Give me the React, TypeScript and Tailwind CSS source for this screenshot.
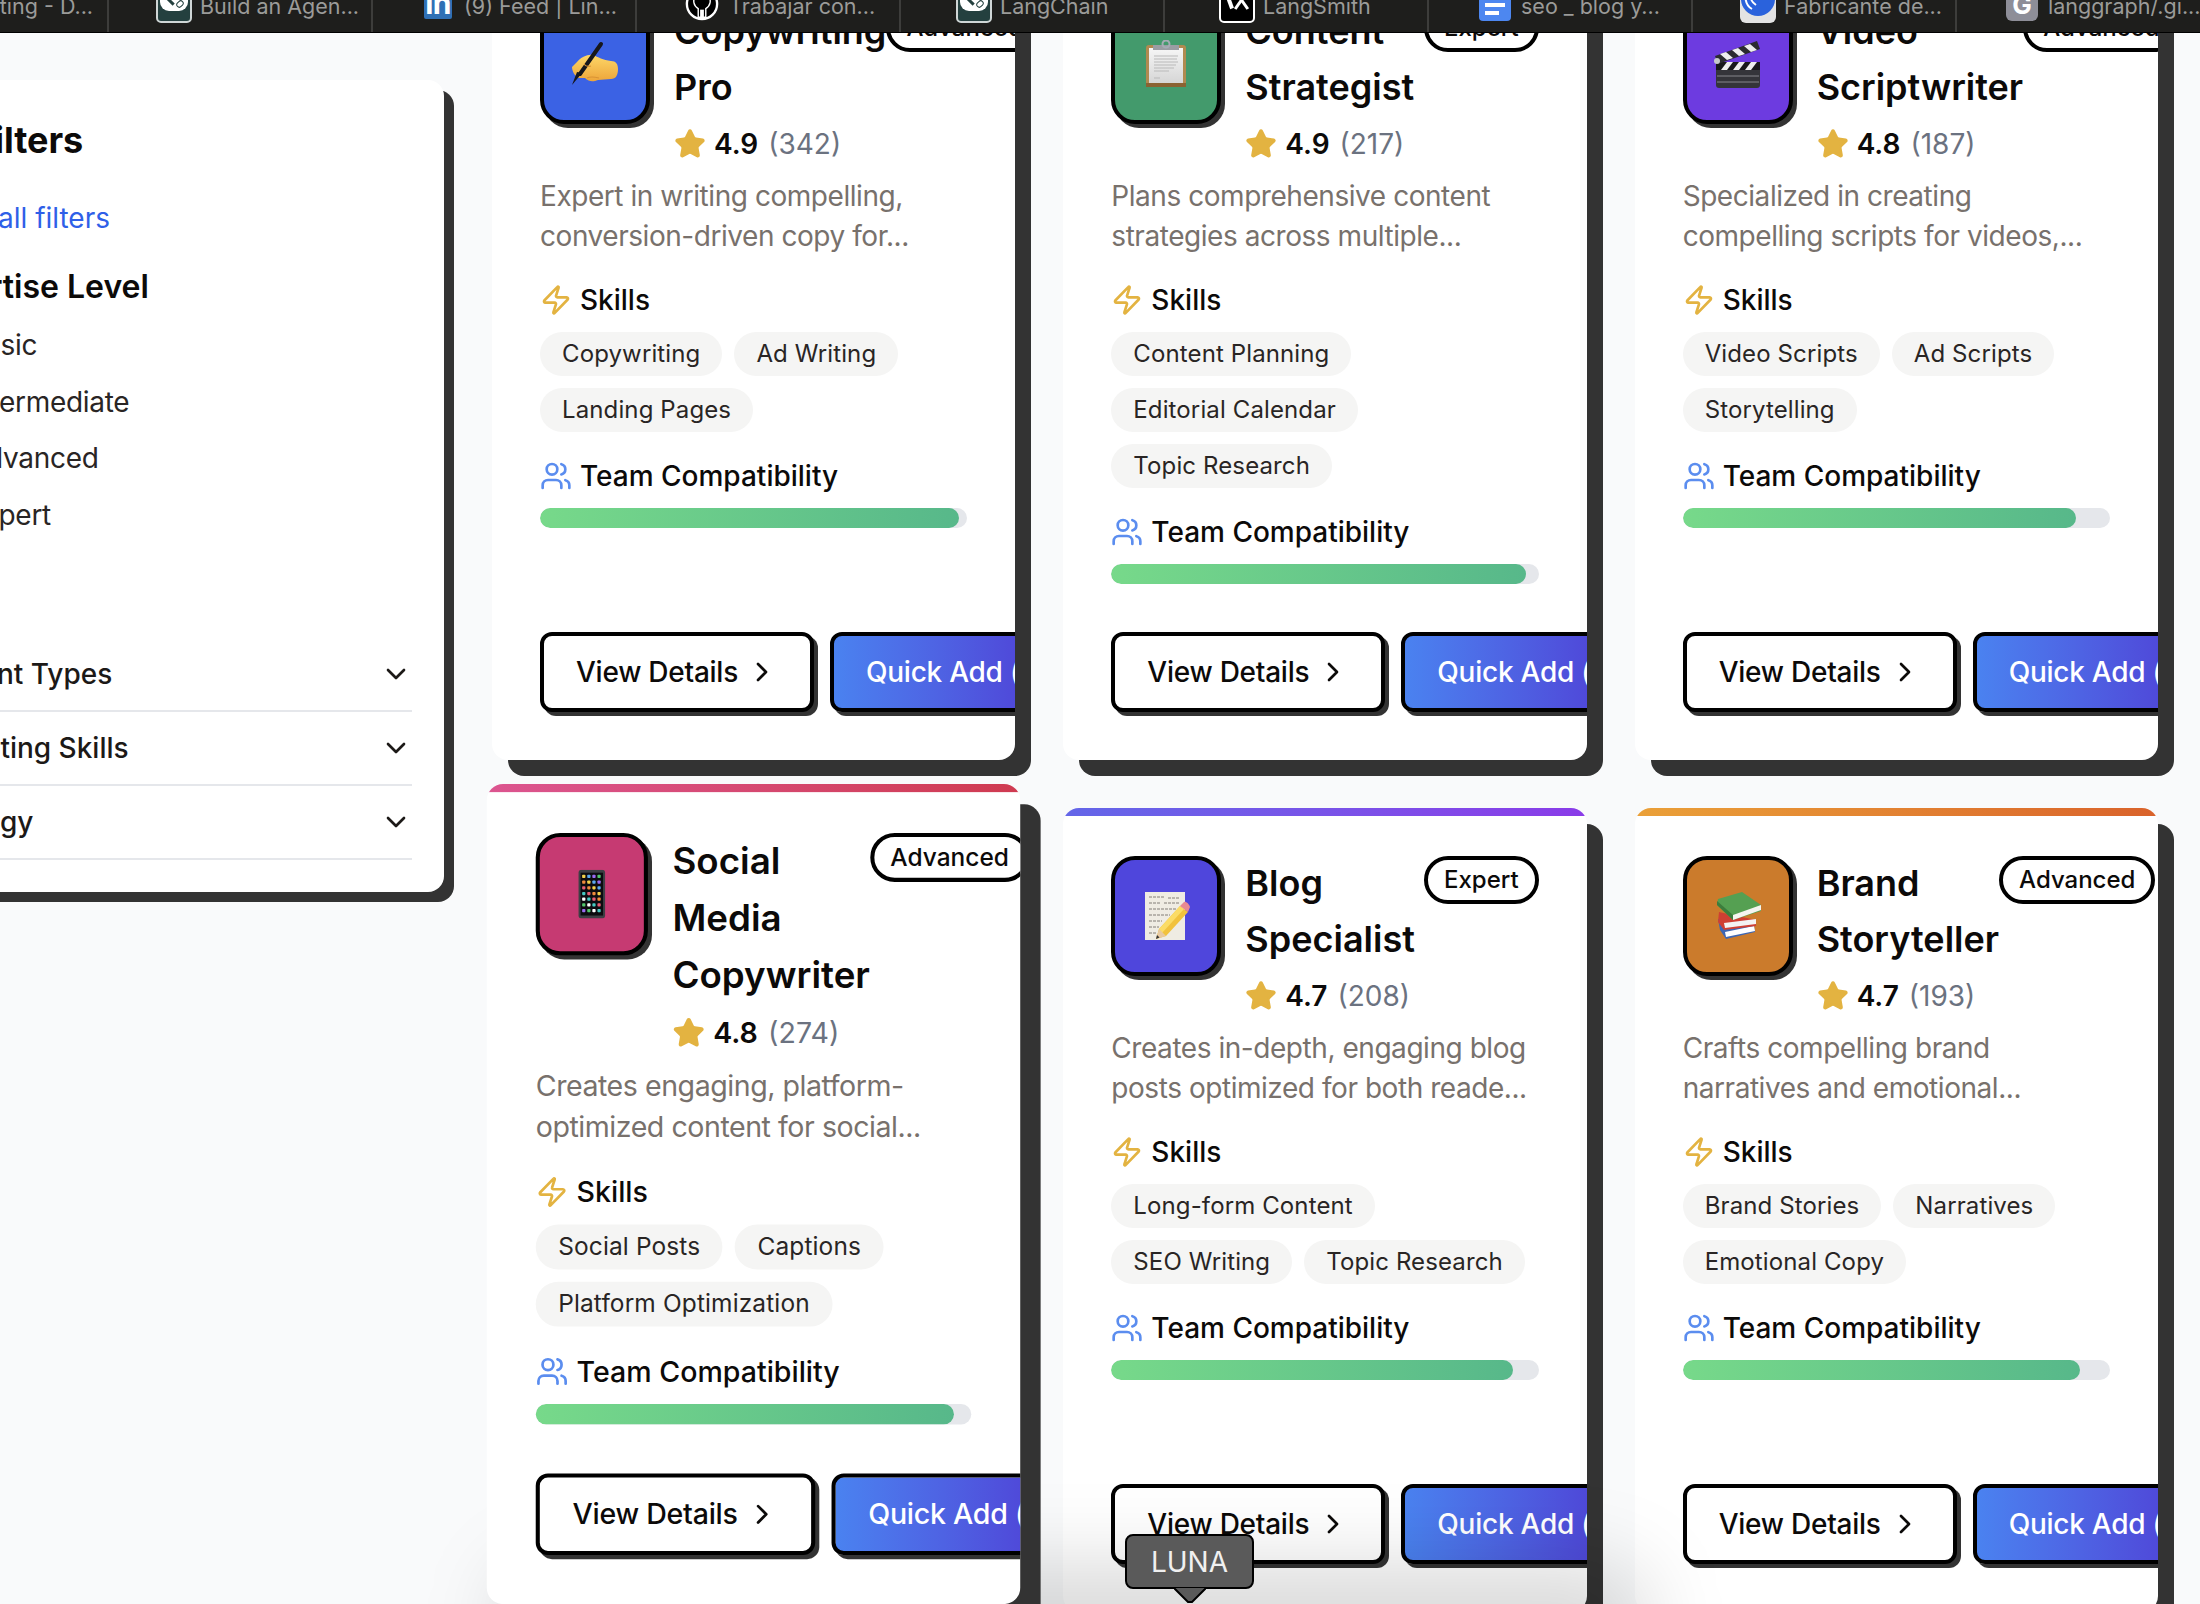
import React from "react";
import {ChevronDown, ChevronRight, Star, Users, Zap} from "lucide-react";

const font = {fontFamily: "Inter, 'Noto Sans', sans-serif"};

const ChainIcon = () => (
  <div className="relative h-[36px] w-[36px] overflow-hidden rounded-[5px] border-2 border-[#cfd6d6] bg-[#24403f]">
    <div className="absolute left-[2px] top-[-6px] h-[28px] w-[28px] rounded-[9px] bg-white" />
    <div className="absolute left-[8px] top-[11px] h-[3px] w-[9px] rotate-45 bg-[#24403f]" />
    <div className="absolute left-[18px] top-[12px] h-[6px] w-[8px] -rotate-45 rounded-full border border-[#24403f]" />
  </div>
);

const LinkedinIcon = () => (
  <div className="mx-auto mb-[4px] flex h-[32px] w-[28px] items-end justify-center overflow-hidden rounded-[2px] bg-[#2f70b5]">
    <span className="text-[30px] font-bold leading-[32px] tracking-tight text-white">in</span>
  </div>
);

const GithubIcon = () => (
  <svg viewBox="0 0 36 36" className="mb-[2px] h-[34px] w-[34px]">
    <circle cx="18" cy="18" r="16" fill="#000000" stroke="#ffffff" strokeWidth="2.5" />
    <path d="M11 10 C14 8 22 8 25 10 C28 14 27 20 22 23 L22 32 H14 L14 23 C9 20 8 14 11 10 Z" fill="#000000" stroke="#ffffff" strokeWidth="1.5" />
    <path d="M16 24 V33 H20 V24 Z" fill="#ffffff" />
  </svg>
);

const SmithIcon = () => (
  <div className="relative h-[36px] w-[36px] overflow-hidden rounded-[5px] border-2 border-white bg-black">
    <div className="absolute left-[6px] top-[2px] h-[18px] w-[4px] -rotate-[20deg] bg-white" />
    <div className="absolute left-[19px] top-[0px] h-[22px] w-[3px] rotate-[35deg] bg-white" />
    <div className="absolute left-[19px] top-[0px] h-[22px] w-[3px] -rotate-[35deg] bg-white" />
  </div>
);

const DocsIcon = () => (
  <div className="mx-auto mb-[2px] flex h-[36px] w-[32px] flex-col justify-end gap-[4px] rounded-[4px] bg-[#4d87f0] px-[6px] pb-[6px]">
    <div className="h-[4px] bg-white" />
    <div className="h-[4px] w-[14px] bg-white" />
  </div>
);

const RingIcon = () => (
  <div className="h-[36px] w-[36px] overflow-hidden rounded-[6px] bg-[#e3e3e3]">
    <svg viewBox="0 0 36 36" className="h-full w-full">
      <circle cx="18" cy="12" r="17" fill="#2a62dc" />
      <path d="M9 -2 C3 8 5 18 12 22" fill="none" stroke="#ffffff" strokeWidth="2" />
      <path d="M14 -2 C8 7 10 14 16 18" fill="none" stroke="#ffffff" strokeWidth="2" />
    </svg>
  </div>
);

const GoogleIcon = () => (
  <div className="mx-auto mb-[2px] flex h-[32px] w-[32px] items-end justify-center rounded-[6px] bg-[#8e8e98]">
    <span className="text-[26px] font-bold leading-[32px] text-white">G</span>
  </div>
);

const tabs: {label: string; offset: string; icon: React.ReactNode}[] = [
  {label: "Marketing - D...", offset: "pl-[47px]", icon: <ChainIcon />},
  {label: "Build an Agen...", offset: "pl-[47px]", icon: <ChainIcon />},
  {label: "(9) Feed | Lin...", offset: "pl-[47px]", icon: <LinkedinIcon />},
  {label: "Trabajar con...", offset: "pl-[48px]", icon: <GithubIcon />},
  {label: "LangChain", offset: "pl-[55px]", icon: <ChainIcon />},
  {label: "LangSmith", offset: "pl-[54px]", icon: <SmithIcon />},
  {label: "seo _ blog y...", offset: "pl-[48px]", icon: <DocsIcon />},
  {label: "Fabricante de...", offset: "pl-[47px]", icon: <RingIcon />},
  {label: "langgraph/.gi...", offset: "pl-[47px]", icon: <GoogleIcon />},
];

const WritingHand = () => (
  <svg viewBox="0 0 48 48" className="h-[48px] w-[48px]">
    <defs>
      <linearGradient id="hand" x1="0" y1="0" x2="0" y2="1">
        <stop offset="0" stopColor="#fdd768" />
        <stop offset="1" stopColor="#eda53a" />
      </linearGradient>
    </defs>
    <path d="M6 22 C10 17 17 14 22 15 C27 17 32 20 40 21 C45 21 47 24 47 29 C47 35 45 39 40 39 L27 40 C22 42 18 42 14 38 L8 38 C3 36 1 30 1 27 Z" fill="url(#hand)" />
    <path d="M30 4 L9 34" stroke="#17171b" strokeWidth="4" strokeLinecap="round" />
    <path d="M11 33 L1 45 L6 32 Z" fill="#17171b" />
    <path d="M13 24 C15 27 17 27 20 26 M16 38 C20 36 24 37 28 38" fill="none" stroke="#d99334" strokeWidth="1.2" />
  </svg>
);

const Clipboard = () => (
  <svg viewBox="0 0 48 48" className="h-[48px] w-[48px]">
    <defs>
      <linearGradient id="paper" x1="0" y1="0" x2="0" y2="1">
        <stop offset="0" stopColor="#f6f6f6" />
        <stop offset="1" stopColor="#d6d6d6" />
      </linearGradient>
    </defs>
    <rect x="4" y="5" width="40" height="42" rx="3" fill="#b08a50" />
    <rect x="4" y="43" width="40" height="4" fill="#8a6232" />
    <rect x="7" y="8" width="34" height="35" fill="url(#paper)" />
    <path d="M11 5 H37 V10 H11 Z" fill="#9a9da3" />
    <circle cx="24" cy="4" r="3.5" fill="none" stroke="#a5acb5" strokeWidth="2" />
    <path d="M12 16 H36 M12 19 H35 M12 22 H36 M12 25 H34 M12 28 H32 M12 31 H27 M12 38 H18" stroke="#b9b9b9" strokeWidth="1.2" />
  </svg>
);

const Clapper = () => (
  <svg viewBox="0 0 48 48" className="h-[48px] w-[48px]">
    <rect x="2" y="22" width="44" height="26" rx="3" fill="#34343a" />
    <path d="M2 22 H46 V30 H2 Z" fill="#18181b" />
    <path d="M7 30 L13 22 H19 L13 30 Z M19 30 L25 22 H31 L25 30 Z M31 30 L37 22 H43 L37 30 Z" fill="#eeeeee" />
    <path d="M3 36 H45 M3 42 H45" stroke="#85858b" strokeWidth="1" />
    <path d="M1 16 L43 1 L46 9 L4 24 Z" fill="#2b2b30" />
    <path d="M6 14 L12 12 L19 18 L13 20 Z M18 10 L24 8 L31 14 L25 16 Z M30 6 L36 4 L43 10 L37 12 Z" fill="#eeeeee" />
    <circle cx="3" cy="21" r="3" fill="#c5c8cc" />
  </svg>
);

const Phone = () => {
  const colors = ["#f2d14b", "#52c76b", "#e85d75", "#5aa9f0", "#ffffff", "#f08a3c", "#9a6cf0", "#45c9c2"];
  return (
    <svg viewBox="0 0 48 48" className="h-[48px] w-[48px]">
      <rect x="11" y="0" width="26" height="48" rx="3" fill="#3c3f44" />
      <rect x="13" y="3" width="22" height="42" fill="#0c0c10" />
      {Array.from({length: 28}).map((_, i) => (
        <rect key={i} x={14.5 + (i % 4) * 5} y={5 + Math.floor(i / 4) * 5.6} width="3.2" height="3.2" rx="0.8" fill={colors[(i * 3 + Math.floor(i / 4)) % colors.length]} />
      ))}
    </svg>
  );
};

const Memo = () => (
  <svg viewBox="0 0 48 48" className="h-[48px] w-[48px]">
    <rect x="3" y="0" width="40" height="48" fill="#efece3" />
    <path d="M7 5 H22 M26 6 H38 M7 11 H18 M22 11 H38 M7 17 H34 M7 23 H28 M7 29 H20 M7 35 H17 M7 41 H14" stroke="#77736c" strokeWidth="0.9" strokeDasharray="3 1" />
    <path d="M38 14 L46 20 L24 44 L14 47 L17 37 Z" fill="#f1c23d" />
    <path d="M38 14 L42 17 L20 41 L17 37 Z" fill="#fbdc66" />
    <path d="M38 14 L42 10 C44 9 47 12 48 15 L46 20 Z" fill="#e88a93" />
    <path d="M17 37 L24 44 L14 47 Z" fill="#e8c9a0" />
    <path d="M15 43 L17.5 45.5 L14 47 Z" fill="#333333" />
  </svg>
);

const Books = () => (
  <svg viewBox="0 0 48 48" className="h-[48px] w-[48px]">
    <path d="M4 27 L40 34 L41 40 L12 47 L6 38 Z" fill="#3e66b3" />
    <path d="M11 40 L40 34 L41 39 L12 45 Z" fill="#ffffff" />
    <path d="M5 20 L42 28 L42 34 L10 38 L4 30 Z" fill="#cf3f33" />
    <path d="M10 31 L42 27 L42 32 L11 36 Z" fill="#f3f3f3" />
    <path d="M4 7 L28 0 L47 13 L47 19 L19 28 L3 13 Z" fill="#55a052" />
    <path d="M19 23 L47 13 L47 18 L19 28 Z" fill="#f5f5f0" />
    <path d="M3 9 L19 23 L19 28 L3 13 Z" fill="#3c7d3d" />
  </svg>
);

type Agent = {
  title: string;
  level: string;
  iconBg: string;
  emoji: React.ReactNode;
  rating: string;
  reviews: string;
  description: string;
  skills: string[];
  compat: number;
  strip: string;
};

const agents: Agent[] = [
  {
    title: "Copywriting Pro",
    level: "Advanced",
    iconBg: "bg-[#3b62e4]",
    emoji: <WritingHand />,
    rating: "4.9",
    reviews: "(342)",
    description: "Expert in writing compelling, conversion-driven copy for...",
    skills: ["Copywriting", "Ad Writing", "Landing Pages"],
    compat: 98,
    strip: "from-[#3b82f6] to-[#4f46e5]",
  },
  {
    title: "Content Strategist",
    level: "Expert",
    iconBg: "bg-[#439a6c]",
    emoji: <Clipboard />,
    rating: "4.9",
    reviews: "(217)",
    description: "Plans comprehensive content strategies across multiple...",
    skills: ["Content Planning", "Editorial Calendar", "Topic Research"],
    compat: 97,
    strip: "from-[#10b981] to-[#059669]",
  },
  {
    title: "Video Scriptwriter",
    level: "Advanced",
    iconBg: "bg-[#6d3be0]",
    emoji: <Clapper />,
    rating: "4.8",
    reviews: "(187)",
    description: "Specialized in creating compelling scripts for videos,...",
    skills: ["Video Scripts", "Ad Scripts", "Storytelling"],
    compat: 92,
    strip: "from-[#8b5cf6] to-[#7c3aed]",
  },
  {
    title: "Social Media Copywriter",
    level: "Advanced",
    iconBg: "bg-[#c63a72]",
    emoji: <Phone />,
    rating: "4.8",
    reviews: "(274)",
    description: "Creates engaging, platform-optimized content for social...",
    skills: ["Social Posts", "Captions", "Platform Optimization"],
    compat: 96,
    strip: "from-[#dc5590] to-[#cf3a50]",
  },
  {
    title: "Blog Specialist",
    level: "Expert",
    iconBg: "bg-[#4f46dc]",
    emoji: <Memo />,
    rating: "4.7",
    reviews: "(208)",
    description: "Creates in-depth, engaging blog posts optimized for both reade...",
    skills: ["Long-form Content", "SEO Writing", "Topic Research"],
    compat: 94,
    strip: "from-[#6366e8] to-[#8a3be8]",
  },
  {
    title: "Brand Storyteller",
    level: "Advanced",
    iconBg: "bg-[#cb7b2c]",
    emoji: <Books />,
    rating: "4.7",
    reviews: "(193)",
    description: "Crafts compelling brand narratives and emotional...",
    skills: ["Brand Stories", "Narratives", "Emotional Copy"],
    compat: 93,
    strip: "from-[#eaa038] to-[#d9622b]",
  },
];

const AgentCard: React.FC<{agent: Agent; lifted?: boolean}> = ({agent, lifted}) => (
  <div
    className={
      "relative flex flex-col overflow-hidden rounded-2xl bg-white p-12 " +
      (lifted ? "z-10 -translate-y-4 scale-[1.02] shadow-[20px_20px_0_#333333]" : "shadow-[16px_16px_0_#333333]")
    }
  >
    <div className={"absolute inset-x-0 top-0 h-2 bg-gradient-to-r " + agent.strip} />
    <div className="mb-3 flex items-start justify-between">
      <div className="flex gap-6">
        <div className={"flex h-[120px] w-[110px] shrink-0 items-center justify-center rounded-3xl border-4 border-black shadow-[4px_4px_0_#333333] " + agent.iconBg}>
          {agent.emoji}
        </div>
        <div>
          <h3 className="-mt-px text-[36px] font-semibold leading-[56px] text-[#0c0a09]">{agent.title}</h3>
          <div className="mt-[9px] flex h-10 items-center gap-2">
            <Star size={32} fill="#e3b341" stroke="#e3b341" />
            <span className="text-[28px] font-semibold text-[#0c0a09]">{agent.rating}</span>
            <span className="ml-[2px] text-[28px] text-[#6b7280]">{agent.reviews}</span>
          </div>
        </div>
      </div>
      <span className="shrink-0 rounded-full border-4 border-black bg-white px-4 py-1 text-[24px] font-medium leading-8 text-[#0c0a09]">
        {agent.level}
      </span>
    </div>
    <p className="text-[28px] leading-10 tracking-[-0.45px] text-[#78716c]">{agent.description}</p>
    <div className="mt-6 flex h-10 items-center gap-2">
      <Zap size={32} stroke="#e3b341" />
      <span className="text-[28px] font-medium text-[#0c0a09]">Skills</span>
    </div>
    <div className="mt-3 flex flex-wrap gap-3">
      {agent.skills.map((skill) => (
        <span key={skill} className="rounded-full bg-[#f5f5f4] px-[22px] py-1.5 text-[24px] leading-8 tracking-[0.12px] text-[#292524]">
          {skill}
        </span>
      ))}
    </div>
    <div className="mt-6 flex h-10 items-center gap-2">
      <Users size={32} stroke="#5b8def" />
      <span className="text-[28px] font-medium text-[#0c0a09]">Team Compatibility</span>
    </div>
    <div className="mt-3 h-5 overflow-hidden rounded-full bg-[#e5e7eb]">
      <div className="h-full rounded-full bg-gradient-to-r from-[#77d98a] to-[#57b88a]" style={{width: `${agent.compat}%`}} />
    </div>
    <div className="mt-auto flex gap-4 pt-12">
      <button type="button" className="flex h-20 shrink-0 items-center gap-2 rounded-xl border-4 border-black bg-white px-8 text-[28px] font-medium tracking-[-0.25px] text-[#0c0a09] shadow-[4px_4px_0_#333333]">
        View Details
        <ChevronRight size={32} />
      </button>
      <button type="button" className="flex h-20 w-[200px] shrink-0 items-center whitespace-nowrap rounded-xl border-4 border-black bg-gradient-to-r from-[#4a82f0] to-[#4f46d8] px-8 text-[28px] font-medium tracking-[-0.25px] text-white shadow-[4px_4px_0_#333333]">
        Quick Add ($29)
      </button>
    </div>
  </div>
);

const FilterRow: React.FC<{label: string; indent: string}> = ({label, indent}) => (
  <div className="flex h-[74px] items-center justify-between border-b-2 border-[#e5e7eb] text-[28px] font-medium text-[#1c1917]">
    <span className={indent}>{label}</span>
    <ChevronDown size={32} stroke="#1c1917" />
  </div>
);

const Sidebar = () => (
  <aside className="-ml-[116px] mt-[47px] h-[812px] w-[560px] shrink-0 rounded-2xl bg-white pl-[50px] pr-8 pt-10 shadow-[10px_10px_0_#333333]">
    <h2 className="ml-[39px] text-[36px] font-bold leading-10 text-[#0c0a09]">Filters</h2>
    <div className="-ml-[14px] mt-[38px] text-[28px] leading-10 text-[#2f5fe8]">Clear all filters</div>
    <h3 className="-ml-[21px] mt-[25px] text-[32px] font-semibold leading-[48px] text-[#0c0a09]">Expertise Level</h3>
    <div className="ml-[33px] mt-[14px] flex flex-col gap-[16.67px] text-[28px] leading-10 tracking-[-0.3px] text-[#292524]">
      <span>Basic</span>
      <span>Intermediate</span>
      <span>Advanced</span>
      <span>Expert</span>
    </div>
    <div className="mt-[103px]">
      <FilterRow label="Content Types" indent="-ml-[17px]" />
      <FilterRow label="Writing Skills" indent="ml-[21px]" />
      <FilterRow label="Strategy" indent="-ml-[14px]" />
    </div>
  </aside>
);

export default function App() {
  return (
    <div className="relative flex h-[1604px] w-[2200px] flex-col overflow-hidden bg-[#f9fafb]" style={font}>
      <div className="flex h-[33px] shrink-0 border-b border-black bg-[#1e1e1c]">
        <div className="-ml-[155px] flex">
          {tabs.map((tab) => (
            <div key={tab.label} className={"flex h-[32px] w-[264px] shrink-0 items-center gap-2 border-r-2 border-[#3d3d3b] " + tab.offset}>
              <div className="-mt-[22px] flex h-[36px] w-[36px] shrink-0 items-end">{tab.icon}</div>
              <span className="-mt-[20px] whitespace-nowrap text-[21.5px] leading-[32px] text-[#9b9b99]">{tab.label}</span>
            </div>
          ))}
        </div>
      </div>
      <div className="flex min-h-0 flex-1 items-start overflow-hidden">
        <Sidebar />
        <div className="-mt-[77px] ml-12 grid w-[1666px] shrink-0 grid-cols-3 gap-12">
          {agents.map((agent, i) => (
            <AgentCard key={agent.title} agent={agent} lifted={i === 3} />
          ))}
        </div>
      </div>
      {/* dock glow that leaks in from below the fold */}
      <div className="pointer-events-none absolute bottom-[-70px] left-[500px] h-[110px] w-[1150px] rounded-full bg-black/15 blur-2xl" />
      <div className="absolute left-[1125px] top-[1534px] flex flex-col items-center">
        <div className="flex h-[55px] w-[129px] items-center justify-center rounded-[8px] border-2 border-black bg-[#5a5a5a] text-[28px] text-[#f0f0f0]">
          LUNA
        </div>
        <svg width="32" height="16" viewBox="0 0 32 16" className="-mt-[2px]">
          <path d="M0 1 H32 L18 15 H14 Z" fill="#5a5a5a" />
          <path d="M0 1 L14 15 H18 L32 1" fill="none" stroke="#000000" strokeWidth="2" />
        </svg>
      </div>
    </div>
  );
}
